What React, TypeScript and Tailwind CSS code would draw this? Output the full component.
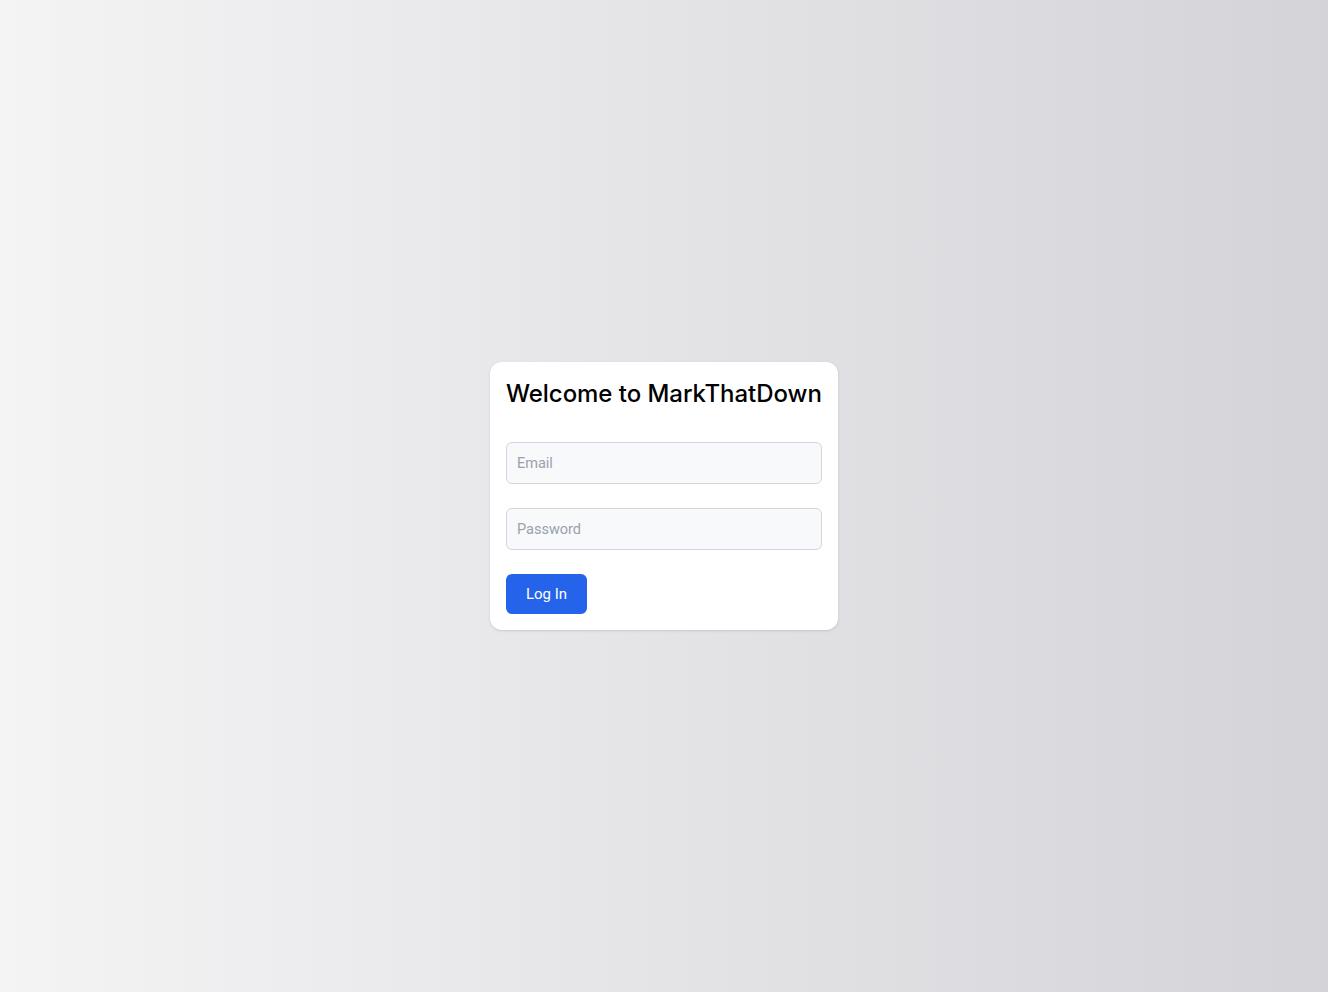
const App = () => {
  return (
    <div className="min-h-screen w-full flex items-center justify-center bg-gradient-to-r from-zinc-100 via-zinc-200 to-zinc-300">
      <div className="w-[348px] bg-white rounded-xl shadow-sm p-4">
        <h1 className="text-2xl text-black font-['Inter',sans-serif] font-medium tracking-[-0.05px] whitespace-nowrap leading-8 mb-8">
          Welcome to MarkThatDown
        </h1>
        <form className="flex flex-col gap-6 font-['Roboto',sans-serif]">
          <input
            type="email"
            placeholder="Email"
            className="w-full h-[42px] px-2.5 text-[14.5px] bg-[#f8f9fa] border border-gray-300 rounded-md placeholder:text-gray-400 outline-none"
          />
          <input
            type="password"
            placeholder="Password"
            className="w-full h-[42px] px-2.5 text-[14.5px] bg-[#f8f9fa] border border-gray-300 rounded-md placeholder:text-gray-400 outline-none"
          />
          <div>
            <button
              type="button"
              className="h-10 w-[81px] bg-[#2563eb] text-white text-[15px] rounded-md"
            >
              Log In
            </button>
          </div>
        </form>
      </div>
    </div>
  );
};

export default App;
